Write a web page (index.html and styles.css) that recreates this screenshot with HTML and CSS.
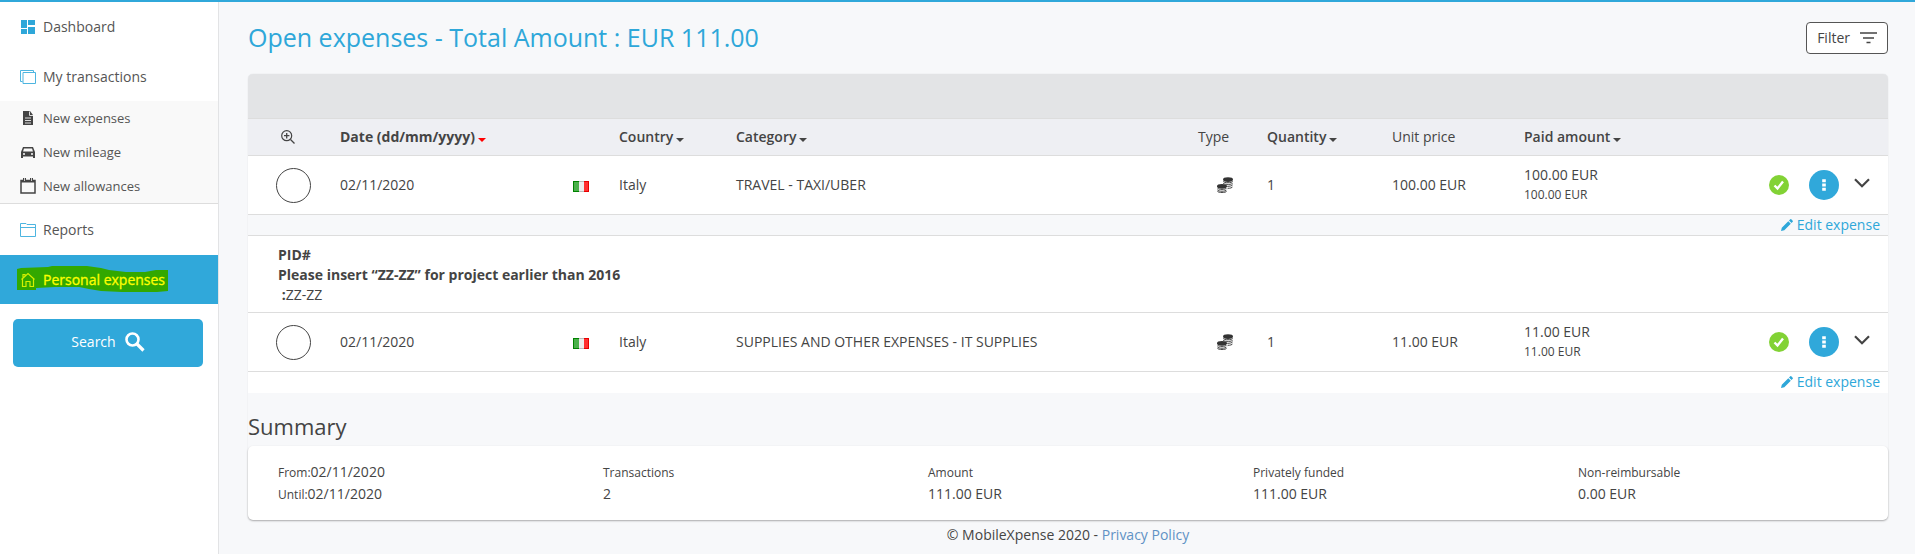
FILE: index.html
```html
<!DOCTYPE html>
<html lang="en">
<head>
  <meta charset="UTF-8" />
  <meta name="viewport" content="width=device-width, initial-scale=1.0" />
  <title>Personal expenses - MobileXpense</title>
  <link rel="stylesheet" href="styles.css">
</head>
<body>
  <svg class="symbols" aria-hidden="true">
    <symbol id="coins" viewBox="0 0 16 16">
      <g fill="#333">
        <ellipse cx="11" cy="2.6" rx="5" ry="2.4" />
        <ellipse cx="5" cy="9.3" rx="5" ry="2.4" />
      </g>
      <g fill="none" stroke="#444" stroke-width="1">
        <path d="M6.2 4.3c1 1.9 8.600 1.900 9.500 0M6.200 6.300c2.500 1.700 8.600 1.400 9.500-.2M10.200 9.300c2.500.1 5-.5 5.500-1.500M10.600 11.300c2.500.1 4.700-.6 5.100-1.600" />
        <path d="M.4 11c1 1.900 8.300 1.900 9.200 0M.4 12.800c1 1.900 8.300 1.900 9.200 0M.4 14.300c1 1.600 8.300 1.600 9.200 0" />
      </g>
    </symbol>
    <symbol id="flag-it" viewBox="0 0 16 11">
      <rect width="16" height="11" fill="#ececec" />
      <rect width="6" height="11" fill="#008200" />
      <rect x="1" y="1" width="5" height="9" fill="#4ab14a" />
      <rect x="11" width="5" height="11" fill="#e60000" />
      <rect x="11" y="1" width="4" height="9" fill="#ff3030" />
      <path d="M6 .5h5M6 10.500h5" stroke="#bbb" />
    </symbol>
    <symbol id="check" viewBox="0 0 20 20">
      <circle cx="10" cy="10" r="10" fill="#82d235" />
      <path d="M5.500 10.500l3 3 5.500-7" fill="none" stroke="#fff" stroke-width="2.400" />
    </symbol>
    <symbol id="dots" viewBox="0 0 4 12">
      <path d="M.2 .2h3.600v3H.2zM.2 4.500h3.600v3H.2zM.2 8.800h3.600v3H.2z" fill="#fff" />
    </symbol>
    <symbol id="chevron" viewBox="0 0 16 10">
      <path d="M1 1.200l7 7 7-7" fill="none" stroke="#444" stroke-width="2.200" />
    </symbol>
    <symbol id="pencil" viewBox="0 0 12 12">
      <path d="M0 12l.8-3.300L7.300 2.200l2.500 2.500-6.500 6.500zM8 1.500L9.300.3q.5-.5 1 0l1.400 1.400q.5.500 0 1L10.500 4z" fill="#2ea7d9" />
    </symbol>
  </svg>

  <div class="layout">
    <nav class="sidebar">
      <a class="nav-item" href="#">
        <svg viewBox="0 0 16 16"><path d="M1 1h6v8H1zM8 1h7v5H8zM1 10h6v5H1zM8 8h7v7H8z" fill="#2ea7d9" /></svg>
        Dashboard
      </a>
      <a class="nav-item" href="#">
        <svg viewBox="0 0 16 16"><path d="M2.500 12.500h-2v-11h13v2M3 3.500h12.500v11H3z" fill="none" stroke="#4db5e0" /></svg>
        My transactions
      </a>
      <div class="submenu">
        <a href="#">
          <svg viewBox="0 0 16 16"><path d="M3 1h7l3 4v10H3z" fill="#444" /><path d="M9.500 1.500v4h3.500M5 8h6M5 10.500h6M5 13h6" fill="none" stroke="#ddd" /></svg>
          New expenses
        </a>
        <a href="#">
          <svg viewBox="0 0 16 16"><path d="M3 3h10l2 5v6h-2v-1.500H3V14H1V8z" fill="#444" /><path d="M4 4.500h8l1 3H3z" fill="#f9f9f9" /><circle cx="4" cy="10" r="1" fill="#fff" /><circle cx="12" cy="10" r="1" fill="#fff" /></svg>
          New mileage
        </a>
        <a href="#">
          <svg viewBox="0 0 16 16"><path d="M1 2.500h14v12.500H1z" fill="none" stroke="#444" stroke-width="1.500" /><path d="M1 2h14v2.500H1zM3 0h3v3H3zM10 0h3v3h-3z" fill="#444" /><path d="M4.500 0v3M11.500 0v3" stroke="#ccc" /></svg>
          New allowances
        </a>
      </div>
      <a class="nav-item" href="#">
        <svg viewBox="0 0 16 16"><path d="M.5 14.500v-13H6l1 1h8.500v12zM.5 5.500h15" fill="none" stroke="#4db5e0" /></svg>
        Reports
      </a>
      <a class="nav-item active" href="#">
        <svg class="marker" viewBox="0 0 152 28" aria-hidden="true"><path d="M0 3L4 2 31 1 35 0H70L84 2 92 4 109 6H128L139 4H151V25L140 26H105L84 25 72 23 62 21H38L19 22V24H0z" fill="#32a800" /></svg>
        <svg viewBox="0 0 16 16"><path d="M1.500 7.500L8 1.500l6.500 6M2.500 6.500v8H6V9.500h4v5h3.500v-8M3 5.500v-3h2V4" fill="none" stroke="#d4f000" stroke-width="1.200" /></svg>
        <span>Personal expenses</span>
      </a>
      <button class="search" type="button">
        Search
        <svg viewBox="0 0 20 20"><circle cx="7.500" cy="7.500" r="6" fill="none" stroke="#fff" stroke-width="2.600" /><path d="M12 12l6.500 6.500" stroke="#fff" stroke-width="3.200" /></svg>
      </button>
    </nav>

    <main>
      <header class="page-head">
        <h1>Open expenses - Total Amount : EUR 111.00</h1>
        <button class="filter" type="button">
          Filter
          <svg viewBox="0 0 18 12"><path d="M1 1h17M4 6h11M7.500 10.500h4" stroke="#444" stroke-width="1.600" /></svg>
        </button>
      </header>

      <div class="panel">
        <div class="toolbar"></div>
        <table>
          <colgroup>
            <col class="c-select"><col class="c-date"><col class="c-flag"><col class="c-country"><col>
            <col class="c-type"><col class="c-qty"><col class="c-unit"><col class="c-paid"><col class="c-actions">
          </colgroup>
          <thead>
            <tr>
              <th class="select">
                <button class="zoom" type="button" aria-label="Zoom">
                  <svg viewBox="0 0 14 14"><circle cx="5.700" cy="5.700" r="5" fill="none" stroke="#444" stroke-width="1.200" /><path d="M3 5.700h5.400M5.700 3v5.400M9.500 9.500l4 4" stroke="#444" stroke-width="1.300" /></svg>
                </button>
              </th>
              <th class="sorted">Date (dd/mm/yyyy)<i class="caret"></i></th>
              <th></th>
              <th>Country<i class="caret"></i></th>
              <th>Category<i class="caret"></i></th>
              <th class="plain">Type</th>
              <th>Quantity<i class="caret"></i></th>
              <th class="plain">Unit price</th>
              <th>Paid amount<i class="caret"></i></th>
              <th></th>
            </tr>
          </thead>
          <tbody>
            <tr class="expense">
              <td class="select"><input type="checkbox" aria-label="Select expense"></td>
              <td>02/11/2020</td>
              <td><svg class="flag"><use href="#flag-it" /></svg></td>
              <td>Italy</td>
              <td>TRAVEL - TAXI/UBER</td>
              <td class="type"><svg class="coins"><use href="#coins" /></svg></td>
              <td>1</td>
              <td>100.00 EUR</td>
              <td>100.00 EUR<small>100.00 EUR</small></td>
              <td>
                <div class="actions">
                  <svg class="check"><use href="#check" /></svg>
                  <button class="more" type="button" aria-label="More"><svg><use href="#dots" /></svg></button>
                  <button class="expand" type="button" aria-label="Expand"><svg><use href="#chevron" /></svg></button>
                </div>
              </td>
            </tr>
            <tr class="edit shaded">
              <td colspan="10"><a href="#"><svg><use href="#pencil" /></svg>Edit expense</a></td>
            </tr>
            <tr class="note">
              <td colspan="10">
                <b>PID#<br>Please insert “ZZ-ZZ” for project earlier than 2016<br>&nbsp;:</b>ZZ-ZZ
              </td>
            </tr>
            <tr class="expense">
              <td class="select"><input type="checkbox" aria-label="Select expense"></td>
              <td>02/11/2020</td>
              <td><svg class="flag"><use href="#flag-it" /></svg></td>
              <td>Italy</td>
              <td>SUPPLIES AND OTHER EXPENSES - IT SUPPLIES</td>
              <td class="type"><svg class="coins"><use href="#coins" /></svg></td>
              <td>1</td>
              <td>11.00 EUR</td>
              <td>11.00 EUR<small>11.00 EUR</small></td>
              <td>
                <div class="actions">
                  <svg class="check"><use href="#check" /></svg>
                  <button class="more" type="button" aria-label="More"><svg><use href="#dots" /></svg></button>
                  <button class="expand" type="button" aria-label="Expand"><svg><use href="#chevron" /></svg></button>
                </div>
              </td>
            </tr>
            <tr class="edit">
              <td colspan="10"><a href="#"><svg><use href="#pencil" /></svg>Edit expense</a></td>
            </tr>
          </tbody>
        </table>

        <h2>Summary</h2>
        <div class="summary">
          <div><p><small>From:</small>02/11/2020</p><p><small>Until:</small>02/11/2020</p></div>
          <div><p><small>Transactions</small></p><p>2</p></div>
          <div><p><small>Amount</small></p><p>111.00 EUR</p></div>
          <div><p><small>Privately funded</small></p><p>111.00 EUR</p></div>
          <div><p><small>Non-reimbursable</small></p><p>0.00 EUR</p></div>
        </div>
      </div>

      <footer>© MobileXpense 2020 - <a href="#">Privacy Policy</a></footer>
    </main>
  </div>
</body>
</html>
```
FILE: styles.css
```css
* {
  box-sizing: border-box;
}
body {
  margin: 0;
  font-family: "Open Sans", "Noto Sans", sans-serif;
  font-size: 14px;
  line-height: 20px;
  color: #444;
  background-color: #f7f8fa;
  border-top: 2px solid #30a8da;
}
a {
  color: #2ea7d9;
  text-decoration: none;
}
button {
  font: inherit;
  color: inherit;
  padding: 0;
  border: none;
  background: none;
  cursor: pointer;
}
svg {
  display: block;
  flex: none;
}
.symbols {
  position: absolute;
  width: 0;
  height: 0;
}
.layout {
  display: flex;
  min-height: calc(100vh - 2px);
}

/* sidebar */
.sidebar {
  flex: none;
  width: 219px;
  background-color: #fff;
  border-right: 1px solid #e2e3e5;
}
.nav-item,
.submenu a {
  display: flex;
  align-items: center;
  gap: 7px;
  padding-left: 20px;
  color: #555;
}
.nav-item {
  position: relative;
  height: 49px;
}
.nav-item + .nav-item {
  margin-top: 1px;
}
.nav-item svg,
.submenu svg {
  width: 16px;
  height: 16px;
}
.submenu {
  margin-bottom: 1px;
  background-color: #f9f9f9;
  border-bottom: 1px solid #ddd;
}
.submenu a {
  height: 34px;
  font-size: 13px;
}
.nav-item.active {
  background-color: #30a8da;
  color: #ff0;
  -webkit-text-stroke: 0.3px #ff0;
}
.nav-item.active > * {
  position: relative;
}
/* highlighter stroke behind the active label */
.nav-item.active .marker {
  position: absolute;
  top: 11px;
  left: 17px;
  width: 152px;
  height: 28px;
}
.search {
  display: flex;
  align-items: center;
  justify-content: center;
  gap: 9px;
  width: calc(100% - 28px);
  height: 48px;
  margin: 15px 13px;
  padding-bottom: 2px;
  border-radius: 5px;
  background-color: #30a8da;
  color: #fff;
}
.search svg {
  width: 20px;
  height: 20px;
}

/* content */
main {
  flex: 1;
  padding: 20px 27px 0 29px;
}
.page-head {
  display: flex;
  align-items: center;
  justify-content: space-between;
  height: 32px;
  margin-bottom: 20px;
}
h1 {
  margin: 0;
  padding-bottom: 2px;
  font-size: 25px;
  font-weight: 400;
  color: #2ea7d9;
}
.filter {
  display: flex;
  align-items: center;
  gap: 9px;
  height: 32px;
  padding: 0 10px;
  border: 1px solid #555;
  border-radius: 4px;
  background-color: #fff;
}
.filter svg {
  width: 18px;
  height: 12px;
}
.panel {
  border-radius: 5px;
  box-shadow: 0 0 1px rgba(0, 0, 0, 0.2);
}
.toolbar {
  height: 44px;
  border-radius: 5px 5px 0 0;
  background-color: #e3e4e6;
}
table {
  width: 100%;
  table-layout: fixed;
  border-collapse: collapse;
  background-color: #fff;
}
.c-select { width: 84px; }
.c-date { width: 233px; }
.c-flag { width: 46px; }
.c-country { width: 117px; }
.c-type { width: 69px; }
.c-qty { width: 125px; }
.c-unit { width: 132px; }
.c-paid { width: 245px; }
.c-actions { width: 127px; }
th,
td {
  padding: 0 8px;
  text-align: left;
  border-top: 1px solid #ddd;
}
th {
  height: 37px;
  font-weight: 600;
  background-color: #eeeff3;
}
th.sorted {
  font-weight: 700;
}
th.plain {
  font-weight: 400;
}
.caret {
  display: inline-block;
  margin-left: 3px;
  border-top: 4px solid #444;
  border-left: 4px solid transparent;
  border-right: 4px solid transparent;
}
.sorted .caret {
  border-top-color: #f00;
}
.select {
  padding-left: 28px;
}
.zoom {
  display: block;
  padding-left: 5px;
}
.zoom svg {
  width: 14px;
  height: 14px;
}
.expense td {
  height: 59px;
}
.expense input {
  display: block;
  appearance: none;
  width: 35px;
  height: 35px;
  margin: 0;
  border: 1px solid #444;
  border-radius: 50%;
  background-color: #fff;
}
.expense small {
  display: block;
  line-height: 20px;
}
small {
  font-size: 12px;
  line-height: 12px;
}
.flag {
  width: 16px;
  height: 11px;
  margin-top: 2px;
}
.type {
  padding-left: 27px;
}
.coins {
  width: 16px;
  height: 16px;
}
.actions {
  display: flex;
  align-items: center;
}
.check {
  width: 20px;
  height: 20px;
}
.more {
  display: flex;
  align-items: center;
  justify-content: center;
  width: 30px;
  height: 30px;
  margin: 0 15px 0 20px;
  border-radius: 50%;
  background-color: #30a8da;
}
.more svg {
  width: 4px;
  height: 12px;
}
.expand {
  padding-bottom: 5px;
}
.expand svg {
  width: 16px;
  height: 10px;
}
.edit td {
  height: 21px;
}
.edit.shaded {
  background-color: #f7f8fa;
}
.edit a {
  display: flex;
  align-items: center;
  justify-content: flex-end;
  gap: 4px;
}
.edit svg {
  width: 12px;
  height: 12px;
}
.note td {
  padding: 9px 30px 7px;
}
h2 {
  margin: 0;
  padding: 18px 0 5px;
  font-size: 22px;
  font-weight: 400;
  line-height: 30px;
}
.summary {
  display: grid;
  grid-template-columns: repeat(5, 1fr);
  padding: 15px 0 15px 15px;
  border-radius: 5px;
  background-color: #fff;
  box-shadow: 0 1px 2px rgba(0, 0, 0, 0.3);
}
.summary div {
  padding-left: 15px;
}
.summary p {
  margin: 0;
  line-height: 22px;
}
footer {
  padding-top: 5px;
  text-align: center;
}
footer a {
  color: #5f92c5;
}
```
